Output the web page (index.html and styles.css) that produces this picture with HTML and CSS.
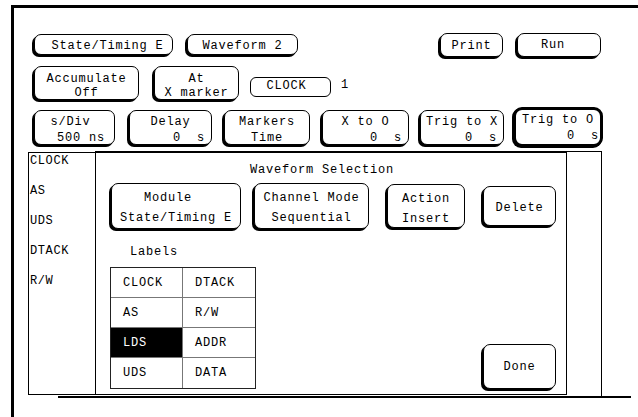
FILE: index.html
```html
<!DOCTYPE html>
<html>
<head>
<meta charset="utf-8">
<link rel="stylesheet" href="styles.css">
</head>
<body>
<div class="frame">
  <div class="row row1">
    <div class="btn b-state">State/Timing E</div>
    <div class="btn b-wave">Waveform 2</div>
    <div class="btn b-print">Print</div>
    <div class="btn b-run">Run</div>
  </div>
  <div class="row row2">
    <div class="btn two b-acc"><div>Accumulate</div><div>Off</div></div>
    <div class="btn two b-at"><div>At</div><div>X marker</div></div>
    <div class="chip">CLOCK</div>
    <div class="num">1</div>
  </div>
  <div class="row row3">
    <div class="btn three b-sdiv"><div class="l1">s/Div </div><div class="l2">500 ns</div></div>
    <div class="btn three b-delay"><div class="l1">Delay</div><div class="l2">0  s</div></div>
    <div class="btn three b-mark"><div class="l1">Markers</div><div class="l1">Time</div></div>
    <div class="btn three b-xo"><div class="l1">X to O</div><div class="l2">0  s</div></div>
    <div class="btn three b-tx"><div class="l1">Trig to X</div><div class="l2">0  s</div></div>
    <div class="btn three b-to"><div class="l1">Trig to O</div><div class="l2">0  s</div></div>
  </div>
  <div class="wave">
    <div class="labels">
      <div>CLOCK</div>
      <div>AS</div>
      <div>UDS</div>
      <div>DTACK</div>
      <div>R/W</div>
    </div>
    <div class="display">
      <div class="dialog">
        <div class="title">Waveform Selection</div>
        <div class="drow">
          <div class="btn dbtn b-mod"><div>Module  </div><div>State/Timing E</div></div>
          <div class="btn dbtn b-chan"><div>Channel Mode</div><div>Sequential</div></div>
          <div class="btn dbtn b-act"><div>Action</div><div>Insert</div></div>
          <div class="btn b-del">Delete</div>
        </div>
        <div class="lbl">Labels</div>
        <div class="lower">
          <div class="table">
            <div class="cell">CLOCK</div><div class="cell">DTACK</div>
            <div class="cell">AS</div><div class="cell">R/W</div>
            <div class="cell sel">LDS</div><div class="cell">ADDR</div>
            <div class="cell last">UDS</div><div class="cell last">DATA</div>
          </div>
          <div class="btn b-done">Done</div>
        </div>
      </div>
    </div>
  </div>
  <div class="baseline"></div>
</div>
</body>
</html>
```

FILE: styles.css
```css
* {
  box-sizing: border-box;
  margin: 0;
  padding: 0;
}

html,
body {
  width: 638px;
  height: 417px;
  overflow: hidden;
  background: #fff;
}

body {
  font-family: "Liberation Mono", "DejaVu Sans Mono", monospace;
  font-size: 12px;
  letter-spacing: 0.8px;
  color: #000;
}

.frame {
  margin: 5px 0 0 11px;
  border-left: 3px solid #000;
  border-top: 3px solid #000;
  height: 412px;
}

.row {
  display: flex;
  align-items: flex-start;
  padding-left: 20px;
  padding-right: 37px;
}

.btn {
  border: 1px solid #000;
  border-radius: 7px;
  box-shadow: -2px 2px 0 #000;
  background: #fff;
  text-align: center;
  white-space: pre;
  flex: none;
}

/* row 1 */
.row1 {
  margin-top: 25px;
}

.b-state {
  margin-top: 1px;
  width: 139px;
  height: 21px;
  line-height: 17px;
  padding: 3px 0 0 8px;
}

.b-wave {
  margin-top: 1px;
  margin-left: 14px;
  width: 111px;
  height: 21px;
  line-height: 17px;
  padding-top: 3px;
}

.b-print {
  margin-left: auto;
  width: 63px;
  height: 24px;
  line-height: 19px;
  padding-top: 3px;
}

.b-run {
  margin-left: 14px;
  width: 84px;
  height: 24px;
  line-height: 19px;
  padding: 2px 12px 0 0;
}

/* row 2 */
.row2 {
  margin-top: 9px;
}

.two {
  height: 34px;
  line-height: 14px;
  padding-top: 5px;
}

.b-acc {
  width: 105px;
}

.b-at {
  margin-left: 15px;
  width: 85px;
}

.chip {
  margin-top: 11px;
  margin-left: 11px;
  width: 81px;
  height: 20px;
  border: 1px solid #000;
  border-radius: 6px;
  line-height: 17px;
  padding-right: 8px;
  text-align: center;
}

.num {
  margin-top: 11px;
  margin-left: 10px;
  line-height: 17px;
}

/* row 3 */
.row3 {
  margin-top: 7px;
}

.three {
  margin-top: 3px;
  height: 35px;
  line-height: 16px;
  padding-top: 3px;
}

.three .l2 {
  text-align: right;
  padding-right: 6px;
}

.b-sdiv {
  width: 81px;
}

.b-sdiv .l2 {
  padding-right: 9px;
}

.b-delay {
  margin-left: 14px;
  width: 83px;
}

.b-mark {
  margin-left: 12px;
  width: 86px;
}

.b-xo {
  margin-left: 12px;
  width: 87px;
}

.b-tx {
  margin-left: 11px;
  width: 84px;
}

.b-to {
  margin-top: 0;
  margin-left: 9px;
  width: 90px;
  height: 40px;
  border: 3px solid #000;
  border-radius: 9px;
  box-shadow: -1px 1px 0 #000;
  padding-top: 2px;
}

.b-to .l2 {
  padding-right: 1px;
}

/* waveform area */
.wave {
  display: flex;
  margin-top: 4px;
  margin-left: 14px;
}

.labels {
  margin-top: 1px;
  width: 67px;
  height: 243px;
  border-left: 1px solid #000;
  border-top: 1px solid #000;
  border-bottom: 1px solid #000;
  line-height: 14px;
  padding: 1px 0 0 1px;
  letter-spacing: 0.6px;
}

.labels div {
  height: 30px;
}

.display {
  width: 507px;
  height: 245px;
  border-top: 1px solid #000;
  border-right: 1px solid #000;
}

.dialog {
  width: 472px;
  height: 243px;
  border: 1px solid #000;
  background: #fff;
}

.title {
  margin-top: 10px;
  padding-left: 154px;
  line-height: 14px;
}

.drow {
  display: flex;
  align-items: center;
  margin-top: 6px;
  padding-left: 15px;
  height: 46px;
}

.dbtn {
  line-height: 20px;
  padding-top: 4px;
}

.b-mod {
  width: 130px;
  height: 46px;
}

.b-chan {
  margin-left: 13px;
  width: 115px;
  height: 46px;
}

.b-act {
  margin-left: 18px;
  width: 78px;
  height: 44px;
}

.b-del {
  margin-left: 18px;
  width: 73px;
  height: 40px;
  line-height: 38px;
  padding-top: 2px;
}

.lbl {
  margin-top: 16px;
  padding-left: 34px;
  line-height: 14px;
}

.lower {
  display: flex;
  justify-content: space-between;
  align-items: flex-end;
  margin-top: 8px;
  padding-left: 14px;
  padding-right: 10px;
}

.table {
  display: grid;
  grid-template-columns: 72px 72px;
  grid-auto-rows: 30px;
  width: 146px;
  border: 1px solid #222;
}

.cell {
  border-bottom: 1px solid #777;
  line-height: 29px;
  padding: 1px 0 0 12px;
}

.cell:nth-child(odd) {
  border-right: 1px solid #777;
}

.cell.last {
  border-bottom: none;
}

.cell.sel {
  background: #000;
  color: #fff;
}

.b-done {
  width: 73px;
  height: 45px;
  line-height: 42px;
  padding-top: 1px;
}

.baseline {
  margin-left: 44px;
  width: 573px;
  height: 2px;
  background: #000;
}
```
